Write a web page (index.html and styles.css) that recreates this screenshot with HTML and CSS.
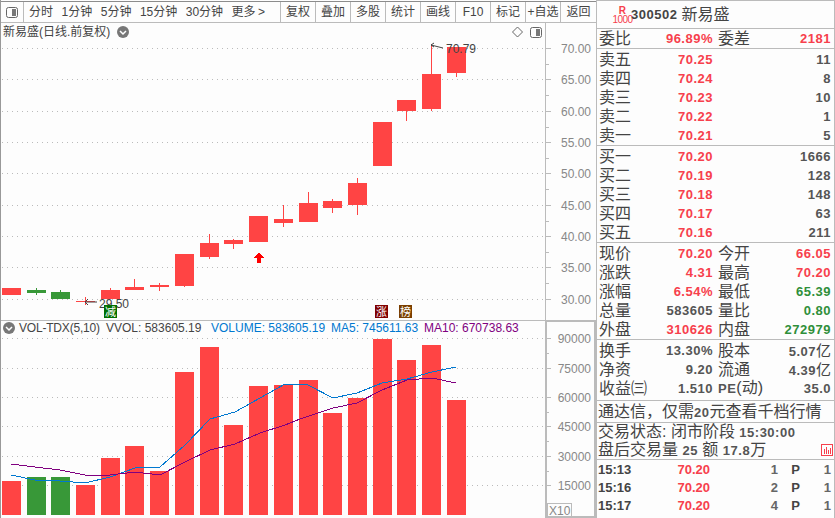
FILE: index.html
```html
<!DOCTYPE html>
<html lang="zh-CN">
<head>
    <meta charset="UTF-8">
    <title>新易盛 300502</title>
    <link rel="stylesheet" href="styles.css">
</head>
<body>
    <main class="chart-side">
        <nav class="toolbar">
            <div class="tool-toggle">
                <svg width="12" height="11" viewBox="0 0 12 11"><rect x="0.5" y="0.5" width="11" height="10" rx="2" class="icon-line"/><rect x="6" y="2" width="4" height="7" class="icon-fill"/></svg>
            </div>
            <div class="periods">
                <span>分时</span><span>1分钟</span><span>5分钟</span><span>15分钟</span><span>30分钟</span><span>更多&thinsp;&gt;</span>
            </div>
            <div class="tools">
                <span>复权</span><span>叠加</span><span>多股</span><span>统计</span><span>画线</span><span>F10</span><span>标记</span><span>+自选</span><span>返回</span>
            </div>
        </nav>

        <svg class="chart" width="595" height="495" viewBox="1 23 595 495">
            <!-- price grid -->
            <g class="grid">
                <path d="M2 48.5H545M2 79.5H545M2 111.5H545M2 142.5H545M2 173.5H545M2 205.5H545M2 236.5H545M2 267.5H545M2 299.5H545"/>
                <path d="M2 338.5H545M2 368.5H545M2 397.5H545M2 426.5H545M2 456.5H545M2 485.5H545"/>
            </g>

            <!-- candles -->
            <g class="up">
                <rect x="2" y="288" width="19" height="7"/>
                <rect x="85" y="297" width="1" height="8"/><rect x="76" y="301" width="19" height="1"/>
                <rect x="110" y="288" width="1" height="3"/><rect x="101" y="290" width="19" height="9"/>
                <rect x="134" y="279" width="1" height="9"/><rect x="125" y="287" width="19" height="3"/>
                <rect x="159" y="283" width="1" height="8"/><rect x="150" y="285" width="19" height="2"/>
                <rect x="184" y="285" width="1" height="2"/><rect x="175" y="254" width="19" height="32"/>
                <rect x="209" y="234" width="1" height="25"/><rect x="200" y="243" width="19" height="14"/>
                <rect x="233" y="239" width="1" height="10"/><rect x="224" y="240" width="19" height="4"/>
                <rect x="249" y="216" width="19" height="26"/>
                <rect x="283" y="205" width="1" height="22"/><rect x="274" y="219" width="19" height="4"/>
                <rect x="308" y="192" width="1" height="12"/><rect x="299" y="203" width="19" height="19"/>
                <rect x="332" y="199" width="1" height="14"/><rect x="323" y="201" width="19" height="7"/>
                <rect x="357" y="178" width="1" height="37"/><rect x="348" y="183" width="19" height="22"/>
                <rect x="373" y="122" width="19" height="44"/>
                <rect x="406" y="110" width="1" height="11"/><rect x="397" y="100" width="19" height="11"/>
                <rect x="431" y="44" width="1" height="67"/><rect x="422" y="74" width="19" height="35"/>
                <rect x="456" y="72" width="1" height="5"/><rect x="447" y="47" width="19" height="26"/>
            </g>
            <g class="down">
                <rect x="36" y="288" width="1" height="7"/><rect x="27" y="290" width="19" height="3"/>
                <rect x="60" y="290" width="1" height="3"/><rect x="51" y="292" width="19" height="7"/>
            </g>

            <!-- volume bars -->
            <g class="up">
                <rect x="2" y="481" width="19" height="34"/>
                <rect x="76" y="485" width="19" height="30"/>
                <rect x="101" y="458" width="19" height="57"/>
                <rect x="125" y="446" width="19" height="69"/>
                <rect x="150" y="471" width="19" height="44"/>
                <rect x="175" y="372" width="19" height="143"/>
                <rect x="200" y="347" width="19" height="168"/>
                <rect x="224" y="425" width="19" height="90"/>
                <rect x="249" y="386" width="19" height="129"/>
                <rect x="274" y="385" width="19" height="130"/>
                <rect x="299" y="380" width="19" height="135"/>
                <rect x="323" y="413" width="19" height="102"/>
                <rect x="348" y="398" width="19" height="117"/>
                <rect x="373" y="339" width="19" height="176"/>
                <rect x="397" y="360" width="19" height="155"/>
                <rect x="422" y="345" width="19" height="170"/>
                <rect x="447" y="400" width="19" height="115"/>
            </g>
            <g class="down">
                <rect x="27" y="477" width="19" height="38"/>
                <rect x="51" y="477" width="19" height="38"/>
            </g>
            <polyline class="ma5" points="11,475 35,480 60,481 85,483 110,477 135,468 160,467 185,445 210,419 235,412 260,398 285,384 308,385 333,398 357,393 382,383 407,379 432,372 456,367"/>
            <polyline class="ma10" points="11,464 35,467 60,470 85,475 110,475 135,472 160,475 185,462 210,450 235,444 260,433 285,425 300,419 333,408 357,403 382,390 407,380 432,378 456,383"/>

            <!-- price marks -->
            <path class="mark-line" d="M431 45L443 48M431 45L434 43M431 45L434 47M85 302H97M85 302L88 299M85 302L88 305"/>
            <text class="mark-text" x="446" y="53">70.79</text>
            <text class="mark-text" x="99" y="308">29.50</text>
            <path class="signal" d="M259 252L264 258H261V263H257V258H254Z"/>

            <rect class="badge-green" x="104" y="305" width="13" height="13"/>
            <text class="badge-text" x="110.5" y="316">减</text>
            <rect class="badge-red" x="375" y="305" width="13" height="13"/>
            <text class="badge-text" x="381.5" y="316">涨</text>
            <rect class="badge-brown" x="399" y="305" width="13" height="13"/>
            <text class="badge-text" x="405.5" y="316">榜</text>

            <!-- headers -->
            <text class="title" x="3" y="36">新易盛(日线.前复权)</text>
            <circle class="icon-fill" cx="123" cy="32" r="6"/>
            <path class="chevron" d="M120 31L123 34L126 31"/>
            <path class="icon-line" d="M517.500 27L522.500 32L517.500 37L512.500 32Z"/>
            <rect class="icon-line" x="530.500" y="27.500" width="11" height="10" rx="2"/>
            <rect class="icon-fill" x="536" y="29" width="4" height="7"/>

            <path class="panel-line" d="M1 320.500H545"/>
            <circle class="icon-fill" cx="9" cy="328" r="6"/>
            <path class="chevron" d="M6 327L9 330L12 327"/>
            <text class="legend" x="19" y="332" textLength="81">VOL-TDX(5,10)</text>
            <text class="legend" x="106" y="332">VVOL: 583605.19</text>
            <text class="legend blue" x="211" y="332">VOLUME: 583605.19</text>
            <text class="legend blue" x="331" y="332">MA5: 745611.63</text>
            <text class="legend purple" x="424" y="332">MA10: 670738.63</text>

            <!-- price axis -->
            <path class="panel-line" d="M545.500 23V320M546 48.500H551M546 79.500H551M546 111.500H551M546 142.500H551M546 173.500H551M546 205.500H551M546 236.500H551M546 267.500H551M546 299.500H551M546 64.500H549M546 95.500H549M546 127.500H549M546 158.500H549M546 189.500H549M546 221.500H549M546 252.500H549M546 283.500H549"/>
            <text class="axis" x="591" y="53">70.00</text>
            <text class="axis" x="591" y="84">65.00</text>
            <text class="axis" x="591" y="116">60.00</text>
            <text class="axis" x="591" y="147">55.00</text>
            <text class="axis" x="591" y="178">50.00</text>
            <text class="axis" x="591" y="210">45.00</text>
            <text class="axis" x="591" y="241">40.00</text>
            <text class="axis" x="591" y="272">35.00</text>
            <text class="axis" x="591" y="304">30.00</text>

            <!-- volume axis -->
            <rect class="axis-box" x="546" y="320.500" width="49" height="196.500"/>
            <path class="panel-line" d="M546 338.500H551M546 368.500H551M546 397.500H551M546 426.500H551M546 456.500H551M546 485.500H551M546 353.500H549M546 412.500H549M546 441.500H549M546 471.500H549"/>
            <text class="axis" x="591" y="343">90000</text>
            <text class="axis" x="591" y="373">75000</text>
            <text class="axis" x="591" y="402">60000</text>
            <text class="axis" x="591" y="431">45000</text>
            <text class="axis" x="591" y="461">30000</text>
            <text class="axis" x="591" y="490">15000</text>
            <rect class="x-box" x="547.500" y="503.500" width="24" height="13"/>
            <text class="x-text" x="549" y="515">X10</text>
        </svg>
    </main>

    <aside class="quote">
        <header class="quote-head">
            <div class="rank"><b>R</b><span>1000</span></div>
            <b class="code">300502</b>
            <span class="name">新易盛</span>
        </header>

        <section class="block block-first">
            <div class="row"><span>委比</span><b class="red">96.89%</b><span class="label2">委差</span><b class="red">2181</b></div>
        </section>

        <section class="block">
            <div class="row"><span>卖五</span><b class="red">70.25</b><i></i><b>11</b></div>
            <div class="row"><span>卖四</span><b class="red">70.24</b><i></i><b>8</b></div>
            <div class="row"><span>卖三</span><b class="red">70.23</b><i></i><b>10</b></div>
            <div class="row"><span>卖二</span><b class="red">70.22</b><i></i><b>1</b></div>
            <div class="row"><span>卖一</span><b class="red">70.21</b><i></i><b>5</b></div>
        </section>

        <section class="block">
            <div class="row"><span>买一</span><b class="red">70.20</b><i></i><b>1666</b></div>
            <div class="row"><span>买二</span><b class="red">70.19</b><i></i><b>128</b></div>
            <div class="row"><span>买三</span><b class="red">70.18</b><i></i><b>148</b></div>
            <div class="row"><span>买四</span><b class="red">70.17</b><i></i><b>63</b></div>
            <div class="row"><span>买五</span><b class="red">70.16</b><i></i><b>211</b></div>
        </section>

        <section class="block">
            <div class="row"><span>现价</span><b class="red">70.20</b><span class="label2">今开</span><b class="red">66.05</b></div>
            <div class="row"><span>涨跌</span><b class="red">4.31</b><span class="label2">最高</span><b class="red">70.20</b></div>
            <div class="row"><span>涨幅</span><b class="red">6.54%</b><span class="label2">最低</span><b class="green">65.39</b></div>
            <div class="row"><span>总量</span><b>583605</b><span class="label2">量比</span><b class="green">0.80</b></div>
            <div class="row"><span>外盘</span><b class="red">310626</b><span class="label2">内盘</span><b class="green">272979</b></div>
        </section>

        <section class="block block-finance">
            <div class="row"><span>换手</span><b>13.30%</b><span class="label2">股本</span><b>5.07<em>亿</em></b></div>
            <div class="row"><span>净资</span><b>9.20</b><span class="label2">流通</span><b>4.39<em>亿</em></b></div>
            <div class="row"><span>收益㈢</span><b>1.510</b><span class="label2"><b>PE</b>(动)</span><b>35.0</b></div>
        </section>

        <section class="block promo">通达信，仅需<b>20</b>元查看千档行情</section>

        <section class="block status">
            <div class="status-row">交易状态: 闭市阶段 <b>15:30:00</b></div>
            <div class="status-row">盘后交易量 <b>25</b> 额 <b>17.8</b>万
                <svg class="bars-icon" width="12" height="12" viewBox="0 0 12 12"><path d="M0.500 0.500H11.500V11.500H0.500ZM3.500 5V10M5.500 3V10M7.500 6V10M9.500 4V10"/></svg>
            </div>
        </section>

        <section class="ticks">
            <div class="tick"><b>15:13</b><b class="red">70.20</b><b class="dim">1</b><b>P</b><b class="dim">1</b></div>
            <div class="tick"><b>15:16</b><b class="red">70.20</b><b class="dim">2</b><b>P</b><b class="dim">1</b></div>
            <div class="tick"><b>15:17</b><b class="red">70.20</b><b class="dim">4</b><b>P</b><b class="dim">1</b></div>
        </section>
    </aside>
</body>
</html>
```

FILE: styles.css
```css
* {
    margin: 0;
    padding: 0;
    box-sizing: border-box;
}

body {
    width: 835px;
    height: 518px;
    overflow: hidden;
    display: grid;
    grid-template-columns: 596px 239px;
    background: #fdfdfd;
    font-family: "Liberation Sans", "Noto Sans CJK SC", sans-serif;
    color: #444;
}

.chart-side {
    border-left: 1px solid #999;
    min-width: 0;
}

.chart {
    display: block;
}

/* toolbar */
.toolbar {
    display: flex;
    height: 22px;
    margin-top: 1px;
    border-top: 1px solid #8c8c8c;
    border-bottom: 1px solid #bbb;
    font-size: 12px;
    line-height: 20px;
}

.tool-toggle {
    width: 23px;
    display: flex;
    align-items: center;
    justify-content: center;
    border-right: 1px solid #bbb;
}

.periods {
    width: 257px;
    display: flex;
    gap: 8.500px;
    padding-left: 5px;
    border-right: 1px solid #bbb;
    white-space: nowrap;
}

.tools {
    flex: 1;
    display: grid;
    grid-template-columns: repeat(9, 1fr);
}

.tools span {
    text-align: center;
    border-right: 1px solid #bbb;
    white-space: nowrap;
}

.tools span:last-child {
    border-right: none;
}

.icon-line {
    fill: none;
    stroke: #666;
}

.icon-fill {
    fill: #777;
}

.chevron {
    fill: none;
    stroke: #fff;
    stroke-width: 1.5;
}

/* chart */
.grid path {
    fill: none;
    stroke: #bbb;
    stroke-dasharray: 1 4;
    shape-rendering: crispEdges;
}

.up {
    fill: #ff4444;
    shape-rendering: crispEdges;
}

.down {
    fill: #389838;
    shape-rendering: crispEdges;
}

.ma5,
.ma10 {
    fill: none;
    stroke-width: 1;
    shape-rendering: crispEdges;
}

.ma5 {
    stroke: #0078d0;
}

.ma10 {
    stroke: #800080;
}

.mark-line {
    fill: none;
    stroke: #444;
}

.mark-text {
    font-size: 12px;
    fill: #444;
}

.signal {
    fill: #f00;
    shape-rendering: crispEdges;
}

.badge-green {
    fill: #006f00;
}

.badge-red {
    fill: #800000;
}

.badge-brown {
    fill: #7b3f00;
}

.badge-text {
    font-size: 11px;
    fill: #fff;
    text-anchor: middle;
}

.title {
    font-size: 12px;
    fill: #444;
}

.legend {
    font-size: 12px;
    fill: #444;
}

.legend.blue {
    fill: #0078d0;
}

.legend.purple {
    fill: #800080;
}

.panel-line {
    fill: none;
    stroke: #bbb;
    shape-rendering: crispEdges;
}

.axis {
    font-size: 12px;
    fill: #888;
    text-anchor: end;
}

.axis-box {
    fill: none;
    stroke: #bbb;
    stroke-width: 2;
    shape-rendering: crispEdges;
}

.x-box {
    fill: none;
    stroke: #bbb;
    shape-rendering: crispEdges;
}

.x-text {
    font-size: 12px;
    fill: #888;
}

/* quote panel */
.quote {
    border-top: 1px solid #bbb;
    border-left: 1px solid #bbb;
    border-right: 1px solid #bbb;
    font-size: 16px;
    line-height: 19px;
    white-space: nowrap;
}

.quote b {
    font-family: "Liberation Sans", sans-serif;
    font-size: 13px;
    font-weight: 700;
    letter-spacing: 0.500px;
    color: #555;
}

.quote b.red {
    color: #f7404c;
}

.quote b.green {
    color: #2f8f3a;
}

.quote-head {
    height: 28px;
    display: flex;
    align-items: center;
    padding-left: 17px;
    border-bottom: 1px solid #bbb;
}

.rank {
    width: 17px;
    display: flex;
    flex-direction: column;
    align-items: center;
    color: #f7404c;
    font-size: 10px;
    line-height: 9px;
    letter-spacing: -0.600px;
}

.quote .rank b {
    color: #f7404c;
    font-size: 10px;
    line-height: 9px;
}

.quote .code {
    color: #444;
}

.name {
    margin-left: 4px;
}

.block {
    padding-top: 1px;
    border-bottom: 1px solid #bbb;
}

.block-first {
    padding-top: 0;
}

.row {
    height: 19px;
    display: grid;
    grid-template-columns: 34px 80px 38px 1fr;
    padding: 0 3px 0 2px;
    align-items: center;
}

.row > b {
    text-align: right;
}

.label2 {
    padding-left: 5px;
}

.row em {
    font-style: normal;
    font-size: 15px;
    font-weight: 400;
    letter-spacing: 0;
    font-family: "Noto Sans CJK SC", sans-serif;
    color: #444;
}

.block-finance {
    padding-top: 0;
    padding-bottom: 3px;
}

.promo {
    height: 22px;
    padding-top: 0;
    line-height: 21px;
    padding-left: 1px;
}

.status {
    position: relative;
    padding-top: 0;
    padding-left: 1px;
}

.status-row {
    height: 18px;
    line-height: 17px;
}

.bars-icon {
    position: absolute;
    right: 1px;
    bottom: 3px;
}

.bars-icon path {
    fill: none;
    stroke: #f7404c;
    shape-rendering: crispEdges;
}

.tick {
    height: 18px;
    display: grid;
    grid-template-columns: 40px 72px 68px 22px 1fr;
    padding: 0 3px 0 1px;
    align-items: center;
}

.tick b {
    text-align: right;
}

.tick b:first-child {
    text-align: left;
}

.quote .tick b {
    letter-spacing: 0;
    color: #444;
}

.quote .tick b.red {
    color: #f7404c;
}

.quote .tick b.dim {
    color: #666;
}
```
